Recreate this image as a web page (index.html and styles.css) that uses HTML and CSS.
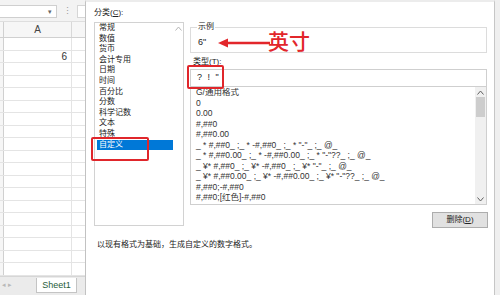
FILE: index.html
```html
<!DOCTYPE html>
<html lang="zh-CN">
<head>
    <meta charset="UTF-8">
    <title>设置单元格格式</title>
    <link rel="stylesheet" href="styles.css">
</head>
<body>
    <div class="screen">
        <div class="sheet">
            <div class="sheet-bar">
                <div class="name-box"><span class="caret">&#9662;</span></div>
                <span class="dots">&#8942;</span>
                <div class="formula"></div>
            </div>
            <div class="col-head">
                <span class="corner"></span>
                <span class="col">A</span>
                <span class="col col-b"></span>
            </div>
            <div class="rows">
                <div class="row"><span class="rh"></span><span class="cell"></span><span class="cell cell-b"></span></div>
                <div class="row"><span class="rh"></span><span class="cell">6</span><span class="cell cell-b"></span></div>
                <div class="row"><span class="rh"></span><span class="cell"></span><span class="cell cell-b"></span></div>
                <div class="row"><span class="rh"></span><span class="cell"></span><span class="cell cell-b"></span></div>
                <div class="row"><span class="rh"></span><span class="cell"></span><span class="cell cell-b"></span></div>
                <div class="row"><span class="rh"></span><span class="cell"></span><span class="cell cell-b"></span></div>
                <div class="row"><span class="rh"></span><span class="cell"></span><span class="cell cell-b"></span></div>
                <div class="row"><span class="rh"></span><span class="cell"></span><span class="cell cell-b"></span></div>
                <div class="row"><span class="rh"></span><span class="cell"></span><span class="cell cell-b"></span></div>
                <div class="row"><span class="rh"></span><span class="cell"></span><span class="cell cell-b"></span></div>
                <div class="row"><span class="rh"></span><span class="cell"></span><span class="cell cell-b"></span></div>
                <div class="row"><span class="rh"></span><span class="cell"></span><span class="cell cell-b"></span></div>
                <div class="row"><span class="rh"></span><span class="cell"></span><span class="cell cell-b"></span></div>
                <div class="row"><span class="rh"></span><span class="cell"></span><span class="cell cell-b"></span></div>
                <div class="row"><span class="rh"></span><span class="cell"></span><span class="cell cell-b"></span></div>
                <div class="row"><span class="rh"></span><span class="cell"></span><span class="cell cell-b"></span></div>
                <div class="row"><span class="rh"></span><span class="cell"></span><span class="cell cell-b"></span></div>
                <div class="row"><span class="rh"></span><span class="cell"></span><span class="cell cell-b"></span></div>
                <div class="row"><span class="rh"></span><span class="cell"></span><span class="cell cell-b"></span></div>
            </div>
            <div class="tabs">
                <span class="nav">&#9666; &#9656;</span>
                <span class="tab">Sheet1</span>
            </div>
        </div>

        <div class="dialog">
            <div class="panes">
                <div class="cat-pane">
                    <div class="label">分类(<u>C</u>):</div>
                    <div class="cat-box">
                        <ul class="cat-list">
                            <li>常规</li>
                            <li>数值</li>
                            <li>货币</li>
                            <li>会计专用</li>
                            <li>日期</li>
                            <li>时间</li>
                            <li>百分比</li>
                            <li>分数</li>
                            <li>科学记数</li>
                            <li>文本</li>
                            <li>特殊</li>
                            <li class="selected">自定义</li>
                        </ul>
                        <div class="cat-scroll">
                            <svg width="7" height="5" viewBox="0 0 7 5"><path d="M0.5 4.5 L3.5 1 L6.5 4.5" fill="none" stroke="#b5b5b5" stroke-width="1"/></svg>
                        </div>
                    </div>
                </div>

                <div class="fmt-pane">
                    <fieldset class="sample">
                        <legend>示例</legend>
                        <div class="sample-value">6"</div>
                    </fieldset>
                    <div class="label type-label">类型(<u>T</u>):</div>
                    <div class="type-input">? ! "</div>
                    <div class="fmt-box">
                        <ul class="fmt-list">
                            <li>G/通用格式</li>
                            <li>0</li>
                            <li>0.00</li>
                            <li>#,##0</li>
                            <li>#,##0.00</li>
                            <li>_ * #,##0_ ;_ * -#,##0_ ;_ * "-"_ ;_ @_</li>
                            <li>_ * #,##0.00_ ;_ * -#,##0.00_ ;_ * "-"??_ ;_ @_</li>
                            <li>_ ¥* #,##0_ ;_ ¥* -#,##0_ ;_ ¥* "-"_ ;_ @_</li>
                            <li>_ ¥* #,##0.00_ ;_ ¥* -#,##0.00_ ;_ ¥* "-"??_ ;_ @_</li>
                            <li>#,##0;-#,##0</li>
                            <li>#,##0;[红色]-#,##0</li>
                        </ul>
                        <div class="vscroll">
                            <span class="arrow">
                                <svg width="7" height="5" viewBox="0 0 7 5"><path d="M0.5 4.5 L3.5 1 L6.5 4.5" fill="none" stroke="#606060" stroke-width="1"/></svg>
                            </span>
                            <span class="thumb"></span>
                            <span class="track"></span>
                            <span class="arrow">
                                <svg width="7" height="5" viewBox="0 0 7 5"><path d="M0.5 0.5 L3.5 4 L6.5 0.5" fill="none" stroke="#606060" stroke-width="1"/></svg>
                            </span>
                        </div>
                    </div>
                    <div class="actions">
                        <button class="btn">删除(<u>D</u>)</button>
                    </div>
                </div>
            </div>

            <p class="hint">以现有格式为基础，生成自定义的数字格式。</p>

            <!-- annotations drawn over the dialog -->
            <span class="mark mark-cat"></span>
            <span class="mark mark-type"></span>
            <svg class="pointer" width="52" height="10" viewBox="0 0 52 10">
                <line x1="7" y1="5" x2="52" y2="5" stroke="#e2262b" stroke-width="2.5"/>
                <polygon points="0,5 10,0.5 10,9.5" fill="#e2262b"/>
            </svg>
            <span class="note">英寸</span>
        </div>

        <div class="edge"></div>
    </div>
</body>
</html>
```

FILE: styles.css
```css
* {
    margin: 0;
    padding: 0;
    box-sizing: border-box;
}

body {
    width: 500px;
    height: 295px;
    overflow: hidden;
    background: #fff;
    font-family: "Liberation Sans", "Noto Sans CJK SC", sans-serif;
    color: #222;
}

u {
    text-decoration: underline;
}

.screen {
    display: flex;
    height: 295px;
}

/* spreadsheet behind the dialog */

.sheet {
    width: 85px;
    display: flex;
    flex-direction: column;
    overflow: hidden;
    background: #fff;
}

.sheet-bar {
    height: 21px;
    display: flex;
    align-items: flex-start;
    padding-top: 5px;
    background: #f3f3f3;
}

.name-box {
    width: 57px;
    height: 13px;
    background: #fff;
    border: 1px solid #cfcfcf;
    border-left: none;
    display: flex;
    justify-content: flex-end;
    align-items: center;
    padding-right: 4px;
}

.caret {
    font-size: 7px;
    color: #666;
}

.dots {
    width: 20px;
    text-align: center;
    font-size: 9px;
    line-height: 13px;
    color: #9a9a9a;
}

.formula {
    flex: 1;
    height: 13px;
    background: #fff;
    border: 1px solid #d6d6d6;
    border-right: none;
}

.col-head {
    height: 17px;
    display: flex;
    background: #f6f6f6;
    border-top: 1px solid #dedede;
    border-bottom: 1px solid #d0d0d0;
}

.corner {
    width: 4px;
    border-right: 1px solid #d0d0d0;
}

.col {
    width: 68px;
    text-align: center;
    font-size: 10px;
    line-height: 16px;
    color: #444;
    border-right: 1px solid #d8d8d8;
}

.col-b {
    flex: 1;
    border-right: none;
}

.rows {
    flex: 1;
}

.row {
    height: 12.5px;
    display: flex;
    border-bottom: 1px solid #e4e4e4;
}

.rh {
    width: 4px;
    background: #f6f6f6;
    border-right: 1px solid #d0d0d0;
}

.cell {
    width: 68px;
    border-right: 1px solid #e4e4e4;
    text-align: right;
    padding-right: 4px;
    font-size: 10px;
    line-height: 12px;
    color: #333;
}

.cell-b {
    flex: 1;
    border-right: none;
}

.tabs {
    height: 19px;
    display: flex;
    align-items: flex-start;
    background: #ebebeb;
    border-top: 1px solid #d6d6d6;
    padding-top: 1px;
}

.nav {
    width: 36px;
    font-size: 7px;
    line-height: 13px;
    padding-left: 2px;
    color: #b8b8b8;
}

.tab {
    width: 41px;
    height: 15px;
    background: #fff;
    border: 1px solid #c4c4c4;
    border-top: none;
    text-align: center;
    font-size: 9px;
    line-height: 14px;
    color: #1f5c3a;
}

/* format cells dialog */

.dialog {
    position: relative;
    width: 410px;
    background: #fff;
    border-left: 1px solid #c2c2c2;
    border-right: 1px solid #c6c6c6;
    border-top: 2px solid #ececec;
    padding: 6px 7px 0 8px;
}

.panes {
    display: flex;
    gap: 6px;
}

.label {
    font-size: 8px;
    line-height: 10px;
    color: #222;
}

.cat-pane {
    width: 90px;
}

.cat-box {
    margin-top: 4px;
    height: 204px;
    border: 1px solid #d2d2d2;
    display: flex;
}

.cat-list {
    flex: 1;
    list-style: none;
    padding-left: 2px;
}

.cat-list li {
    font-size: 8px;
    line-height: 10.6px;
    padding-left: 2px;
    color: #222;
}

.cat-list .selected {
    background: #0078d7;
    color: #fff;
}

.cat-scroll {
    width: 10px;
    display: flex;
    justify-content: center;
    padding-top: 3px;
}

.fmt-pane {
    width: 297px;
    padding-top: 14px;
}

.sample {
    border: 1px solid #dcdcdc;
    padding: 5px 6px 5px;
    min-width: 0;
}

.sample legend {
    font-size: 8px;
    line-height: 10px;
    padding: 0 1px;
    color: #222;
}

.sample-value {
    font-size: 9px;
    line-height: 10px;
    padding-left: 1px;
}

.type-label {
    margin-top: 4px;
    padding-left: 3px;
}

.type-input {
    margin-top: 2px;
    height: 18px;
    border: 1px solid #cfcfcf;
    padding: 2px 6px 4px;
    font-size: 9px;
    line-height: 10px;
    word-spacing: 3px;
}

.fmt-box {
    height: 118px;
    border: 1px solid #cfcfcf;
    border-top: none;
    display: flex;
    overflow: hidden;
}

.fmt-list {
    flex: 1;
    list-style: none;
    padding-left: 5px;
    overflow: hidden;
}

.fmt-list li {
    font-size: 8.5px;
    line-height: 10.5px;
    white-space: nowrap;
    color: #333;
}

.vscroll {
    width: 11px;
    display: flex;
    flex-direction: column;
    background: #f0f0f0;
}

.arrow {
    height: 10px;
    display: flex;
    align-items: center;
    justify-content: center;
}

.thumb {
    height: 20px;
    margin: 0 1px;
    background: #cdcdcd;
}

.track {
    flex: 1;
}

.actions {
    margin-top: 7px;
    display: flex;
    justify-content: flex-end;
}

.btn {
    width: 56px;
    height: 16px;
    margin-right: -1px;
    background: #e1e1e1;
    border: 1px solid #adadad;
    font-family: "Liberation Sans", "Noto Sans CJK SC", sans-serif;
    font-size: 8px;
    line-height: 14px;
    color: #222;
}

.hint {
    margin: 12px 0 0 3px;
    font-size: 8px;
    line-height: 10px;
    color: #222;
}

/* red annotations */

.mark {
    position: absolute;
    border: 2px solid #e0262b;
    border-radius: 2px;
}

.mark-cat {
    left: 5px;
    top: 135px;
    width: 58px;
    height: 24px;
}

.mark-type {
    left: 101px;
    top: 63px;
    width: 37px;
    height: 24px;
}

.pointer {
    position: absolute;
    left: 132px;
    top: 36px;
}

.note {
    position: absolute;
    left: 182px;
    top: 26px;
    font-family: "Noto Sans CJK SC", sans-serif;
    font-size: 21px;
    line-height: 24px;
    font-weight: 500;
    color: #e2262b;
}

.edge {
    flex: 1;
    background: #efefef;
}
```
